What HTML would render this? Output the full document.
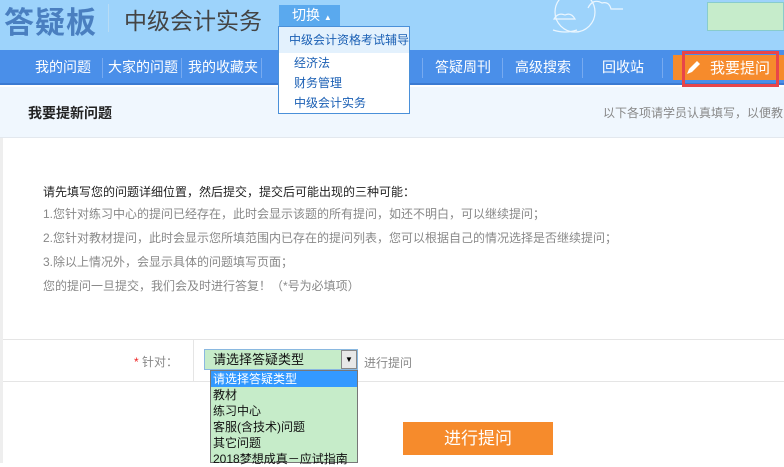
<!DOCTYPE html><html><head><meta charset="utf-8"><style>
*{margin:0;padding:0;box-sizing:border-box}
body{width:784px;height:463px;overflow:hidden;background:#fff;font-family:"Liberation Sans","Noto Sans CJK SC",sans-serif;position:relative}
.a{position:absolute;white-space:nowrap}
</style></head><body>
<div class="a" style="left:0;top:0;width:784px;height:50px;background:#9dd3fb"></div>
<div class="a" style="left:4px;top:-2px;font-size:30px;font-weight:bold;color:#4a7fc0;letter-spacing:1px">答疑板</div>
<div class="a" style="left:108px;top:4px;width:1px;height:28px;background:#b8dcf5"></div>
<div class="a" style="left:124px;top:2px;font-size:23px;color:#444">中级会计实务</div>
<div class="a" style="left:279px;top:5px;width:61px;height:21px;background:#5aa9ee;color:#fff;font-size:14px;padding-left:13px;line-height:21px">切换 <span style="font-size:8px">▲</span></div>
<svg class="a" style="left:550px;top:0" width="160" height="45" fill="none" stroke="#fff" stroke-width="1.2" opacity=".8"><path d="M4 19 q4-7 11-4 q6-3 10 4 z"/><path d="M38 8 q5-10 14-5 q7-2 9 6 h12"/><circle cx="280" cy="12" r="20" transform="translate(-255 0)"/><path d="M258 30 q12 4 24 0" transform="translate(-255 0)"/></svg>
<div class="a" style="left:707px;top:2px;width:77px;height:29px;background:#c6eccb;border:1px solid #8cc"></div>
<div class="a" style="left:0;top:50px;width:784px;height:35px;background:#4a8fe9;border-bottom:2px solid #3b7ad2"></div>
<div class="a" style="left:0;top:50px;height:35px;width:784px;color:#fff;font-size:14px;line-height:35px">
<span class="a" style="left:35px">我的问题</span><span class="a" style="left:102px;top:8px;width:1px;height:20px;background:#77aaf0"></span>
<span class="a" style="left:108px">大家的问题</span><span class="a" style="left:181px;top:8px;width:1px;height:20px;background:#77aaf0"></span>
<span class="a" style="left:188px">我的收藏夹</span><span class="a" style="left:261px;top:8px;width:1px;height:20px;background:#77aaf0"></span>
<span class="a" style="left:422px;top:8px;width:1px;height:20px;background:#77aaf0"></span>
<span class="a" style="left:435px">答疑周刊</span><span class="a" style="left:502px;top:8px;width:1px;height:20px;background:#77aaf0"></span>
<span class="a" style="left:515px">高级搜索</span><span class="a" style="left:582px;top:8px;width:1px;height:20px;background:#77aaf0"></span>
<span class="a" style="left:602px">回收站</span><span class="a" style="left:662px;top:8px;width:1px;height:20px;background:#77aaf0"></span>
</div>
<div class="a" style="left:673px;top:55px;width:111px;height:25px;background:#f68b2c"></div>
<div class="a" style="left:682px;top:51px;width:97px;height:36px;border:3px solid #e8454a;color:#fff;font-size:15px;line-height:30px;padding-left:25px">我要提问</div>
<svg class="a" style="left:684px;top:59px" width="18" height="18"><path d="M3 15 l2-5 l8-8 l3 3 l-8 8z" fill="#fff"/></svg>
<div class="a" style="left:0;top:87px;width:784px;height:51px;background:#f0f7fe;border-bottom:1px solid #e3e8ee"></div>
<div class="a" style="left:28px;top:103px;font-size:14px;font-weight:bold;color:#222">我要提新问题</div>
<div class="a" style="left:603px;top:104px;font-size:12px;color:#888">以下各项请学员认真填写，以便教</div>
<div class="a" style="left:0;top:138px;width:3px;height:325px;background:#eee"></div>
<div class="a" style="left:43px;top:183px;font-size:12px;color:#222">请先填写您的问题详细位置，然后提交，提交后可能出现的三种可能：</div>
<div class="a" style="left:43px;top:202px;font-size:12px;color:#888;line-height:24px">1.您针对练习中心的提问已经存在，此时会显示该题的所有提问，如还不明白，可以继续提问；<br>2.您针对教材提问，此时会显示您所填范围内已存在的提问列表，您可以根据自己的情况选择是否继续提问；<br>3.除以上情况外，会显示具体的问题填写页面；<br>您的提问一旦提交，我们会及时进行答复！（*号为必填项）</div>
<div class="a" style="left:3px;top:339px;width:781px;height:43px;border-top:1px solid #e5e5e5;border-bottom:1px solid #e5e5e5"></div>
<div class="a" style="left:193px;top:340px;width:1px;height:42px;background:#e5e5e5"></div>
<div class="a" style="left:134px;top:353px;font-size:12px;color:#888"><span style="color:#e22">*</span> 针对：</div>
<div class="a" style="left:204px;top:349px;width:154px;height:21px;background:#c6ecc9;border:1px solid #8ab8e0;font-size:13px;line-height:19px;padding-left:8px;color:#111">请选择答疑类型</div>
<div class="a" style="left:341px;top:350px;width:16px;height:19px;background:#e8e8e8;border:1px solid #888;font-size:8px;text-align:center;line-height:17px">▼</div>
<div class="a" style="left:364px;top:354px;font-size:12px;color:#888">进行提问</div>
<div class="a" style="left:403px;top:422px;width:150px;height:33px;background:#f68b2c;color:#fff;font-size:17px;text-align:center;line-height:33px">进行提问</div>
<div class="a" style="left:210px;top:370px;width:148px;height:93px;background:#c6ecc9;border:1px solid #777;font-size:12px;line-height:16px;color:#111">
<div style="background:#3399ff;color:#fff;padding-left:2px">请选择答疑类型</div>
<div style="padding-left:2px">教材<br>练习中心<br>客服(含技术)问题<br>其它问题<br>2018梦想成真－应试指南</div></div>
<div class="a" style="left:278px;top:26px;width:132px;height:88px;background:#fff;border:1px solid #4a90d9;font-size:12px;color:#1a5fb4">
<div style="background:#e3f1fd;height:26px;line-height:26px;padding-left:10px">中级会计资格考试辅导</div>
<div style="line-height:20px;padding-left:15px">经济法<br>财务管理<br>中级会计实务</div></div>
</body></html>
